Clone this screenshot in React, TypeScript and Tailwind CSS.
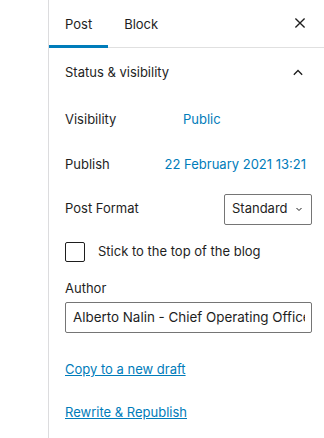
import React from "react";

export default function App() {
  return (
    <div className="w-[324px] h-[438px] bg-white flex text-[#1e1e1e] text-[13px] overflow-hidden" style={{ fontFamily: "Inter, 'Noto Sans', sans-serif" }}>
      <div className="w-[48px] shrink-0" />
      <div className="flex-1 min-w-0 border-l border-[#dcdcde] flex flex-col">
        <div className="h-[48px] flex items-stretch border-b border-[#e0e0e0] relative">
          <div className="px-[16px] flex items-center justify-center border-b-[3px] border-[#007cba] mb-[-1px] pt-[4px]">Post</div>
          <div className="px-[16px] flex items-center justify-center pt-[2px]">Block</div>
          <div className="flex-1" />
          <div className="w-[48px] flex items-center justify-center pb-[1px]">
            <svg width="20" height="20" viewBox="0 0 24 24"><path d="M6.5 6.5l11 11M17.5 6.5l-11 11" stroke="#1e1e1e" strokeWidth="1.6" fill="none" /></svg>
          </div>
        </div>
        <div className="flex items-center justify-between h-[50px] pl-[16px] pr-[16px]">
          <span>Status &amp; visibility</span>
          <svg width="20" height="20" viewBox="0 0 24 24"><path d="M7 14l5-5 5 5" stroke="#1e1e1e" strokeWidth="1.6" fill="none" /></svg>
        </div>
        <div className="pl-[16px] pr-[12px] flex flex-col">
          <div className="flex items-center h-[36px] mt-[4px]">
            <span className="w-[118px]">Visibility</span>
            <span className="text-[#007cba]">Public</span>
          </div>
          <div className="flex items-center h-[36px] mt-[9px] justify-between">
            <span>Publish</span>
            <span className="text-[#007cba] mr-[6px]">22 February 2021 13:21</span>
          </div>
          <div className="flex items-center h-[36px] mt-[8px] justify-between">
            <span>Post Format</span>
            <div className="w-[88px] h-[31px] border border-[#757575] rounded-[2px] flex items-center pl-[7px] pr-[6px] justify-between">
              <span>Standard</span>
              <svg width="12" height="12" viewBox="0 0 24 24"><path d="M7 10l5 5 5-5" stroke="#1e1e1e" strokeWidth="2" fill="none" /></svg>
            </div>
          </div>
          <div className="flex items-center mt-[15px] h-[20px]">
            <div className="w-[20px] h-[20px] border border-[#1e1e1e] rounded-[2px] shrink-0" />
            <span className="ml-[13px]">Stick to the top of the blog</span>
          </div>
          <div className="mt-[15px] h-[22px] flex items-center pt-[2px]">Author</div>
          <div className="mt-[3px] h-[31px] border border-[#757575] rounded-[2px] flex items-center pl-[7px] pr-[6px] overflow-hidden whitespace-nowrap text-[13.4px]">
            <span className="overflow-hidden">Alberto Nalin - Chief Operating Officer</span>
          </div>
          <div className="mt-[27px] h-[20px] flex items-center">
            <a className="text-[#007cba] underline">Copy to a new draft</a>
          </div>
          <div className="mt-[23px] h-[20px] flex items-center">
            <a className="text-[#007cba] underline">Rewrite &amp; Republish</a>
          </div>
        </div>
      </div>
    </div>
  );
}
